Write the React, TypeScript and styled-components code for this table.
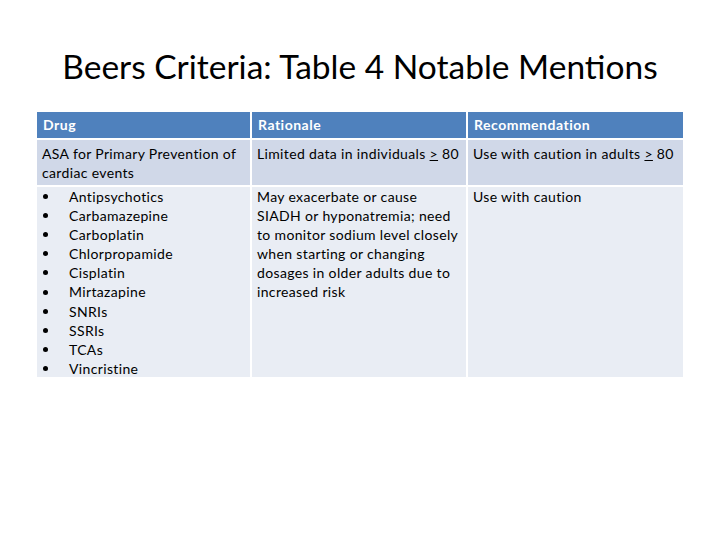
import React from "react";
import styled, { createGlobalStyle } from "styled-components";

const Global = createGlobalStyle`
  html, body { margin: 0; padding: 0; background: #ffffff; }
  body { font-family: "Lato", "Open Sans", sans-serif; }
`;

const Page = styled.div`
  width: 720px;
  height: 540px;
  background: #ffffff;
  display: flex;
  flex-direction: column;
  align-items: center;
  box-sizing: border-box;
  padding-top: 44px;
`;

const Title = styled.h1`
  margin: 0;
  font-family: "Lato", sans-serif;
  font-weight: 400;
  font-size: 33.5px;
  line-height: 44px;
  color: #000000;
`;

const Table = styled.div`
  margin-top: 24px;
  width: 646px;
  display: grid;
  grid-template-columns: 213px 214px 215px;
  column-gap: 2px;
  row-gap: 2px;
`;

const HeadCell = styled.div`
  background: #4f81bd;
  color: #ffffff;
  font-weight: 700;
  font-size: 14px;
  letter-spacing: 0.5px;
  line-height: 19px;
  height: 26px;
  box-sizing: border-box;
  padding: 3px 4px 0 6px;
`;

const Cell = styled.div<{ $shade: "dark" | "light"; $h: number; $top: number }>`
  background: ${(p) => (p.$shade === "dark" ? "#d0d8e8" : "#e9edf4")};
  color: #000000;
  font-size: 14px;
  letter-spacing: 0.35px;
  line-height: 19.1px;
  height: ${(p) => p.$h}px;
  box-sizing: border-box;
  padding: ${(p) => p.$top}px 4px 0 5px;
  white-space: nowrap;
`;

const Ge = styled.span`
  text-decoration: underline;
  text-underline-offset: 1px;
`;

const List = styled.ul`
  margin: 0;
  padding: 0;
  list-style: none;
`;

const Item = styled.li`
  display: flex;
  align-items: center;
  &::before {
    content: "";
    width: 5px;
    height: 5px;
    border-radius: 50%;
    background: #000;
    margin: 0 21px 0 1px;
    flex: none;
  }
`;

const drugs = [
  "Antipsychotics",
  "Carbamazepine",
  "Carboplatin",
  "Chlorpropamide",
  "Cisplatin",
  "Mirtazapine",
  "SNRIs",
  "SSRIs",
  "TCAs",
  "Vincristine",
];

export default function App() {
  return (
    <>
      <Global />
      <Page>
        <Title>Beers Criteria: Table 4 Notable Mentions</Title>
        <Table>
          <HeadCell>Drug</HeadCell>
          <HeadCell>Rationale</HeadCell>
          <HeadCell>Recommendation</HeadCell>

          <Cell $shade="dark" $h={45} $top={4}>
            ASA for Primary Prevention of
            <br />
            cardiac events
          </Cell>
          <Cell $shade="dark" $h={45} $top={4}>
            Limited data in individuals <Ge>&gt;</Ge> 80
          </Cell>
          <Cell $shade="dark" $h={45} $top={4}>
            Use with caution in adults <Ge>&gt;</Ge> 80
          </Cell>

          <Cell $shade="light" $h={190} $top={0}>
            <List>
              {drugs.map((d) => (
                <Item key={d}>{d}</Item>
              ))}
            </List>
          </Cell>
          <Cell $shade="light" $h={190} $top={0}>
            May exacerbate or cause
            <br />
            SIADH or hyponatremia; need
            <br />
            to monitor sodium level closely
            <br />
            when starting or changing
            <br />
            dosages in older adults due to
            <br />
            increased risk
          </Cell>
          <Cell $shade="light" $h={190} $top={0}>
            Use with caution
          </Cell>
        </Table>
      </Page>
    </>
  );
}
